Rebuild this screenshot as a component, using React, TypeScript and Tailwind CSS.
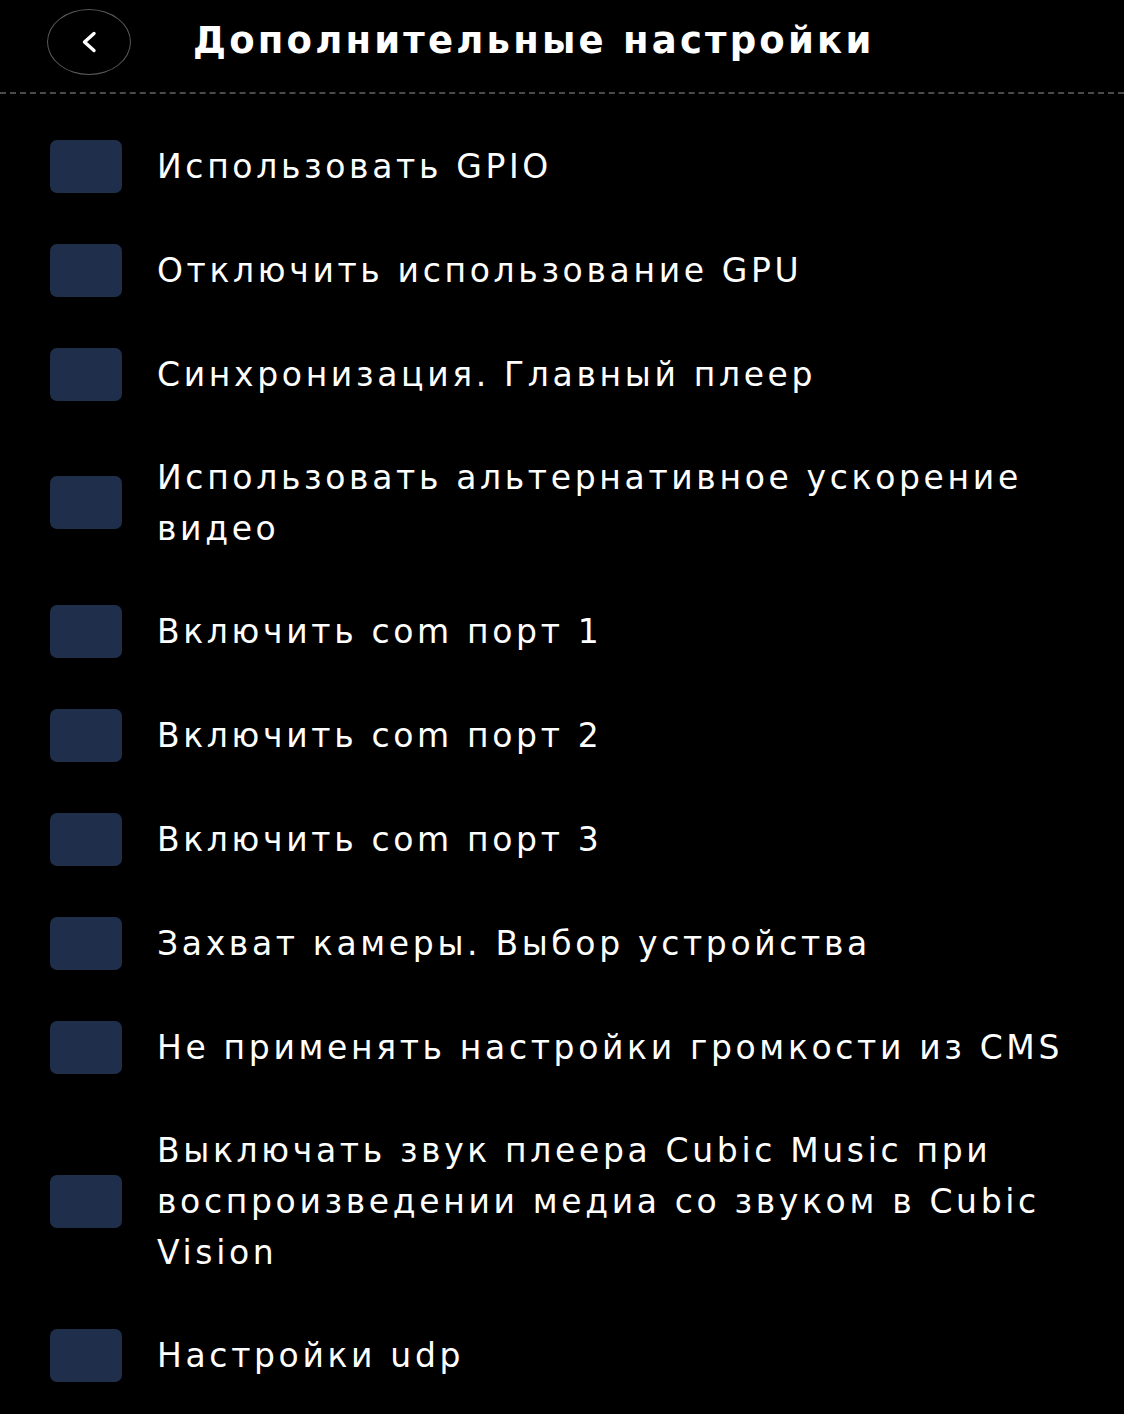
import React from "react";

const items: string[][] = [
  ["Использовать GPIO"],
  ["Отключить использование GPU"],
  ["Синхронизация. Главный плеер"],
  ["Использовать альтернативное ускорение", "видео"],
  ["Включить com порт 1"],
  ["Включить com порт 2"],
  ["Включить com порт 3"],
  ["Захват камеры. Выбор устройства"],
  ["Не применять настройки громкости из CMS"],
  ["Выключать звук плеера Cubic Music при", "воспроизведении медиа со звуком в Cubic", "Vision"],
  ["Настройки udp"],
];

export default function App() {
  return (
    <div
      className="w-[1124px] h-[1414px] bg-black text-white overflow-hidden"
      style={{ fontFamily: '"DejaVu Sans", "Noto Sans", sans-serif' }}
    >
      <header className="flex items-center h-[92px] pl-[47px] pb-[8px]">
        <button className="w-[84px] h-[66px] rounded-[50%] border border-[#5a5a5a] flex items-center justify-center">
          <svg width="20" height="22" viewBox="0 0 20 22" fill="none">
            <path d="M15 2.5 L5.5 11 L15 19.5" stroke="white" strokeWidth="3.4" strokeLinecap="round" strokeLinejoin="round" />
          </svg>
        </button>
        <h1 className="ml-[62px] text-[37px] font-bold tracking-[3.2px] leading-none -mt-[4px]">
          Дополнительные настройки
        </h1>
      </header>
      <div className="border-t-2 border-dashed border-[#4a4a4a]" />
      <ul className="pt-[20px] px-[50px]">
        {items.map((lines, i) => (
          <li key={i} className="flex items-center py-[25.5px]">
            <span className="w-[72px] h-[53px] rounded-[7px] bg-[#1e2e4b] shrink-0" />
            <span className="ml-[35px] text-[33px] leading-[51px] tracking-[3.65px] whitespace-nowrap">
              {lines.map((l, j) => (
                <span key={j} className="block">{l}</span>
              ))}
            </span>
          </li>
        ))}
      </ul>
    </div>
  );
}
